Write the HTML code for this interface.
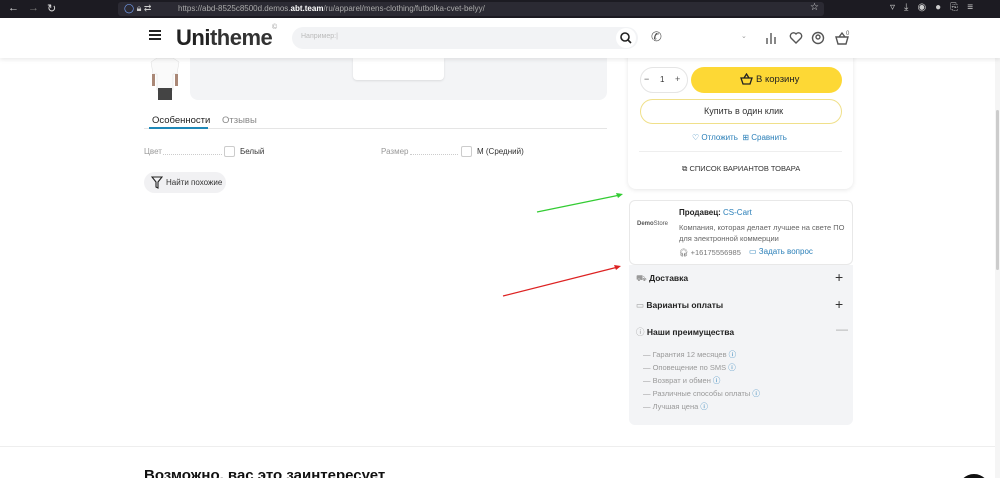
<!DOCTYPE html>
<html><head><meta charset="utf-8"><style>
*{box-sizing:border-box;margin:0;padding:0}
html,body{width:1000px;height:478px;overflow:hidden}
body{background:#fff;font-family:"Liberation Sans",sans-serif;position:relative;color:#222}
.a{position:absolute}
.t{position:absolute;white-space:nowrap}
</style></head><body>
<!-- browser bar -->
<div class="a" style="left:0;top:0;width:1000px;height:18px;background:#1c1b22"></div>
<div class="a" style="left:118px;top:2px;width:706px;height:14px;background:#2b2a33;border-radius:3px"></div>
<div class="t" style="left:8px;top:2px;font-size:11px;color:#ddd">←</div>
<div class="t" style="left:28px;top:2px;font-size:11px;color:#777">→</div>
<div class="t" style="left:47px;top:2px;font-size:11px;color:#ddd">↻</div>
<div class="t" style="left:124px;top:3px;font-size:9px;color:#7aa7ff">◯ <span style="color:#ccc">🔒︎ ⇄</span></div>
<div class="t" style="left:178px;top:4px;font-size:8px;color:#aaa">https://abd-8525c8500d.demos.<b style="color:#fff">abt.team</b>/ru/apparel/mens-clothing/futbolka-cvet-belyy/</div>
<div class="t" style="left:810px;top:2px;font-size:10px;color:#ddd">☆</div>
<div class="t" style="left:890px;top:2px;font-size:10px;color:#ccc;letter-spacing:9px">▿⤓◉●⎘≡</div>
<!-- header -->
<div class="a" style="left:0;top:18px;width:1000px;height:40px;background:#fff;box-shadow:0 2px 4px rgba(0,0,0,.08);z-index:2">
 <div class="a" style="left:149px;top:16px;width:12px;height:2px;background:#222;box-shadow:0 4px 0 #222,0 -4px 0 #222"></div>
 <div class="t" style="left:176px;top:7px;font-size:22px;font-weight:bold;color:#222;letter-spacing:-0.5px">Uni<span style="color:#333">theme</span></div>
 <div class="t" style="left:272px;top:6px;font-size:7px;color:#999">©</div>
 <div class="a" style="left:292px;top:9px;width:346px;height:22px;background:#f2f3f5;border-radius:11px"></div>
 <div class="t" style="left:301px;top:15px;font-size:7px;color:#bbb">Например:|</div>
 <div class="a" style="left:616px;top:10px;width:20px;height:20px;background:#fff;border-radius:50%"></div>
 <svg class="a" style="left:619px;top:13px" width="14" height="14" viewBox="0 0 14 14"><circle cx="6" cy="6" r="4" fill="none" stroke="#222" stroke-width="1.6"/><line x1="9" y1="9" x2="12" y2="12" stroke="#222" stroke-width="1.6"/></svg>
 <div class="t" style="left:651px;top:11px;font-size:13px;color:#555">✆</div>
 <div class="t" style="left:741px;top:14px;font-size:7px;color:#999">⌄</div>
 <svg class="a" style="left:764px;top:12px" width="110" height="16" viewBox="0 0 110 16"><g fill="none" stroke="#555" stroke-width="1.4"><path d="M3 14V8M7 14V3M11 14V7"/><path d="M32 13l-5-5a3 3 0 0 1 5-4 3 3 0 0 1 5 4z"/><circle cx="54" cy="8" r="5.5"/><circle cx="54" cy="7" r="2"/><path d="M72 7h12l-2 7h-8z M75 7l3-4 3 4"/></g><text x="82" y="5" font-size="6" fill="#555" font-family="Liberation Sans">0</text></svg>
</div>
<!-- scrollbar -->
<div class="a" style="left:995px;top:58px;width:5px;height:420px;background:#f5f5f5"></div>
<div class="a" style="left:996px;top:110px;width:3px;height:160px;background:#ccc;border-radius:2px"></div>
<!-- product images -->
<svg class="a" style="left:148px;top:58px" width="34" height="42" viewBox="0 0 34 42"><rect x="9" y="0" width="16" height="30" fill="#f4f4f4"/><path d="M3 4l6-4h16l6 4-2 12h-4v16H9V16H5z" fill="#fafafa" stroke="#ddd" stroke-width=".5"/><rect x="10" y="30" width="14" height="12" fill="#444"/><rect x="4" y="16" width="3" height="12" fill="#a87"/><rect x="27" y="16" width="3" height="12" fill="#a87"/></svg>
<div class="a" style="left:190px;top:40px;width:417px;height:60px;background:#f3f4f6;border-radius:8px"></div>
<div class="a" style="left:353px;top:58px;width:91px;height:22px;background:#fff;border-radius:0 0 4px 4px;box-shadow:0 1px 2px rgba(0,0,0,.1)"></div>
<!-- tabs -->
<div class="t" style="left:152px;top:115px;font-size:9.5px;color:#222">Особенности</div>
<div class="t" style="left:222px;top:115px;font-size:9.5px;color:#888">Отзывы</div>
<div class="a" style="left:144px;top:128px;width:463px;height:1px;background:#e5e5e5"></div>
<div class="a" style="left:149px;top:127px;width:59px;height:2px;background:#1e88b8"></div>
<!-- features -->
<div class="t" style="left:144px;top:147px;font-size:8px;color:#999">Цвет</div>
<div class="a" style="left:163px;top:154px;width:59px;border-top:1px dotted #ccc"></div>
<div class="a" style="left:224px;top:146px;width:11px;height:11px;border:1px solid #ccc;border-radius:2px"></div>
<div class="t" style="left:240px;top:147px;font-size:8px;color:#333">Белый</div>
<div class="t" style="left:381px;top:147px;font-size:8px;color:#999">Размер</div>
<div class="a" style="left:410px;top:154px;width:48px;border-top:1px dotted #ccc"></div>
<div class="a" style="left:461px;top:146px;width:11px;height:11px;border:1px solid #ccc;border-radius:2px"></div>
<div class="t" style="left:477px;top:147px;font-size:8px;color:#333">M (Средний)</div>
<div class="a" style="left:144px;top:172px;width:82px;height:21px;background:#f1f1f3;border-radius:11px"></div>
<svg class="a" style="left:151px;top:176px" width="12" height="13" viewBox="0 0 12 13"><path d="M1 1h10L7 6v6L5 11V6z" fill="none" stroke="#222" stroke-width="1.1"/></svg>
<div class="t" style="left:166px;top:178px;font-size:8px;color:#333">Найти похожие</div>
<!-- right card -->
<div class="a" style="left:628px;top:40px;width:225px;height:149px;background:#fff;border-radius:8px;box-shadow:0 1px 5px rgba(0,0,0,.1)"></div>
<div class="a" style="left:640px;top:67px;width:48px;height:26px;border:1px solid #e5e5e5;border-radius:13px"></div>
<div class="t" style="left:644px;top:74px;font-size:9px;color:#555">−</div>
<div class="t" style="left:660px;top:75px;font-size:8px;color:#333">1</div>
<div class="t" style="left:675px;top:74px;font-size:9px;color:#555">+</div>
<div class="a" style="left:691px;top:67px;width:151px;height:26px;background:#fdd835;border-radius:13px"></div>
<svg class="a" style="left:740px;top:73px" width="13" height="12" viewBox="0 0 13 12"><path d="M1 5h11l-2 6H3z M4 5l2.5-4 2.5 4" fill="none" stroke="#222" stroke-width="1.3"/></svg>
<div class="t" style="left:756px;top:74px;font-size:9.5px;color:#222">В корзину</div>
<div class="a" style="left:640px;top:99px;width:202px;height:25px;border:1px solid #f0e08a;border-radius:13px"></div>
<div class="t" style="left:704px;top:106px;font-size:9px;color:#333">Купить в один клик</div>
<div class="t" style="left:692px;top:133px;font-size:8px;color:#2a7fb8">♡ Отложить&nbsp; ⊞ Сравнить</div>
<div class="a" style="left:639px;top:151px;width:203px;height:1px;background:#eee"></div>
<div class="t" style="left:682px;top:164px;font-size:7.5px;color:#333">⧉ СПИСОК ВАРИАНТОВ ТОВАРА</div>
<!-- seller card -->
<div class="a" style="left:629px;top:200px;width:224px;height:65px;background:#fff;border:1px solid #e8e8e8;border-radius:6px"></div>
<div class="t" style="left:637px;top:221px;font-size:6px;color:#555;font-weight:bold">Demo<span style="font-weight:normal">Store</span></div>
<div class="t" style="left:679px;top:208px;font-size:8px;color:#222;font-weight:bold">Продавец: <span style="font-weight:normal;color:#2a7fb8">CS-Cart</span></div>
<div class="t" style="left:679px;top:222px;font-size:7.5px;color:#666;line-height:11px">Компания, которая делает лучшее на свете ПО<br>для электронной коммерции</div>
<div class="t" style="left:679px;top:248px;font-size:7.5px;color:#777">🎧︎ +16175556985</div>
<div class="t" style="left:749px;top:247px;font-size:8px;color:#2a7fb8">▭ Задать вопрос</div>
<!-- accordion -->
<div class="a" style="left:629px;top:265px;width:224px;height:160px;background:#f3f4f6;border-radius:0 0 6px 6px"></div>
<div class="t" style="left:636px;top:273px;font-size:8.5px;color:#222;font-weight:bold"><span style="color:#999;font-weight:normal">⛟</span> Доставка</div>
<div class="t" style="left:835px;top:269px;font-size:14px;color:#333">+</div>
<div class="t" style="left:636px;top:300px;font-size:8.5px;color:#222;font-weight:bold"><span style="color:#999;font-weight:normal">▭</span> Варианты оплаты</div>
<div class="t" style="left:835px;top:296px;font-size:14px;color:#333">+</div>
<div class="t" style="left:636px;top:326px;font-size:8.5px;color:#222;font-weight:bold"><span style="color:#999;font-weight:normal">ⓘ</span> Наши преимущества</div>
<div class="t" style="left:836px;top:322px;font-size:12px;color:#aaa">—</div>
<div class="t" style="left:643px;top:348px;font-size:7.5px;color:#999;line-height:13px">— Гарантия 12 месяцев <span style="color:#2a7fb8">ⓘ</span><br>— Оповещение по SMS <span style="color:#2a7fb8">ⓘ</span><br>— Возврат и обмен <span style="color:#2a7fb8">ⓘ</span><br>— Различные способы оплаты <span style="color:#2a7fb8">ⓘ</span><br>— Лучшая цена <span style="color:#2a7fb8">ⓘ</span></div>
<!-- arrows -->
<svg class="a" style="left:0;top:0" width="1000" height="478"><line x1="537" y1="212" x2="620" y2="195" stroke="#3c3" stroke-width="1.2"/><path d="M623 194l-7-1 2 5z" fill="#3c3"/><line x1="503" y1="296" x2="618" y2="267" stroke="#d22" stroke-width="1.2"/><path d="M621 266l-7-1 2 5z" fill="#d22"/></svg>
<!-- bottom -->
<div class="a" style="left:0;top:446px;width:995px;height:1px;background:#eee"></div>
<div class="t" style="left:144px;top:467px;font-size:15px;font-weight:bold;color:#111">Возможно, вас это заинтересует</div>
<div class="a" style="left:958px;top:474px;width:32px;height:32px;background:#111;border-radius:50%"></div>
</body></html>
